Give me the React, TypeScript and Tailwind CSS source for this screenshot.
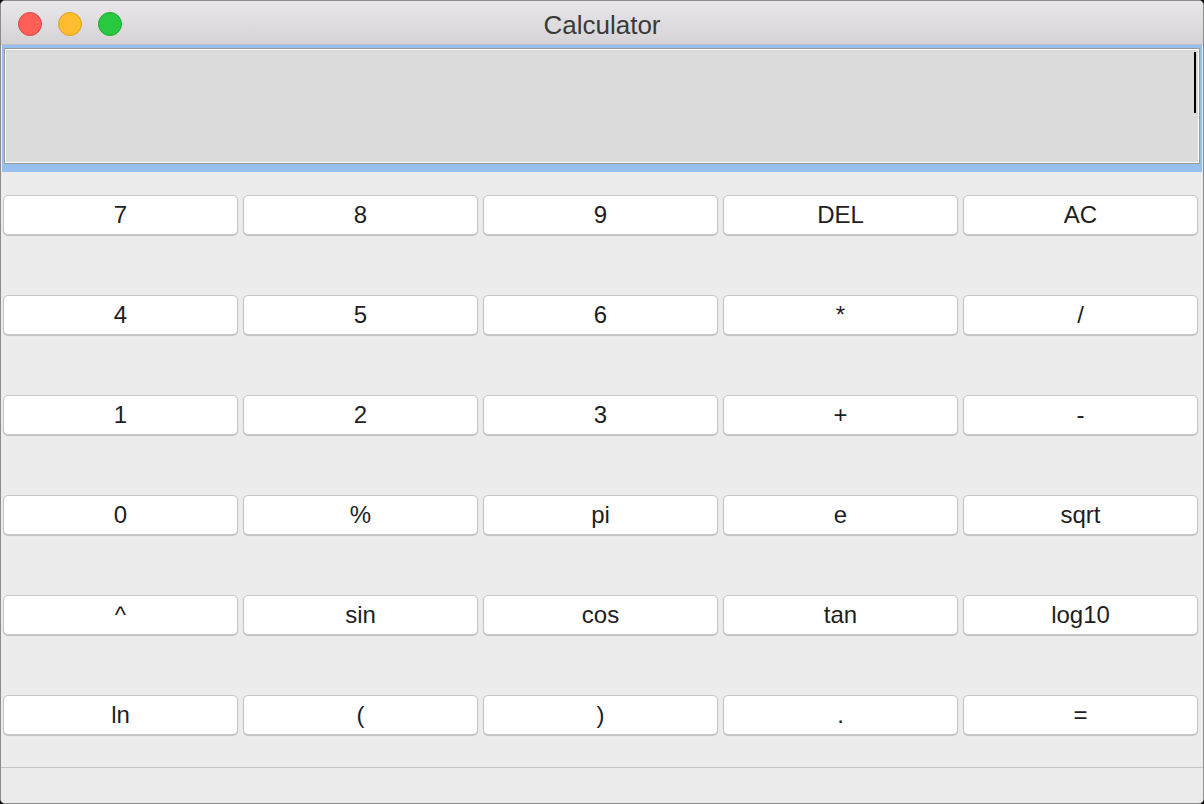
const rows: string[][] = [
  ["7", "8", "9", "DEL", "AC"],
  ["4", "5", "6", "*", "/"],
  ["1", "2", "3", "+", "-"],
  ["0", "%", "pi", "e", "sqrt"],
  ["^", "sin", "cos", "tan", "log10"],
  ["ln", "(", ")", ".", "="],
];

function TrafficLights() {
  return (
    <div className="flex items-center gap-[16px] pl-[17px] pt-[2px]">
      <span className="h-[24px] w-[24px] rounded-full border border-[#e0443e] bg-[#fe5f57]" />
      <span className="h-[24px] w-[24px] rounded-full border border-[#dea123] bg-[#febc2e]" />
      <span className="h-[24px] w-[24px] rounded-full border border-[#1aab29] bg-[#28c840]" />
    </div>
  );
}

function Key({ label }: { label: string }) {
  return (
    <button className="flex h-[40px] items-center justify-center rounded-[5px] border border-[#c6c6c6] bg-white text-[24px] text-[#1e1e1e] shadow-[0_1px_1px_rgba(0,0,0,0.18)]">
      {label}
    </button>
  );
}

export default function App() {
  return (
    <div className="h-[804px] w-[1204px] bg-black font-['Liberation_Sans',Arial,sans-serif]">
      <div className="flex h-full flex-col overflow-hidden rounded-[5px] border border-[#8c8c8c] bg-[#ececec]">
        {/* title bar */}
        <div className="relative flex h-[44px] shrink-0 items-center border-b border-[#c2c0c2] bg-gradient-to-b from-[#e9e7e9] to-[#d5d3d5]">
          <TrafficLights />
          <div className="absolute inset-0 flex items-center justify-center pt-[5px] text-[26px] text-[#3a3a3a]">
            Calculator
          </div>
        </div>

        {/* display, focused */}
        <div className="mx-[1px] shrink-0 bg-[#96c1ee] pb-[8px] pl-[2px] pr-[2px] pt-[3px]">
          <div className="border border-[#9a9a9a] bg-[#dbdbdb] outline-1 -outline-offset-2 outline-white">
            <div className="flex h-[114px] items-start justify-end pr-[3px] pt-[3px]">
              <span className="h-[61px] w-[2px] bg-black" />
            </div>
          </div>
        </div>

        {/* keypad */}
        <div className="grid shrink-0 grid-cols-[repeat(5,235px)] gap-x-[5px] gap-y-[60px] pl-[2px] pt-[23px]">
          {rows.flat().map((k, i) => (
            <Key key={i} label={k} />
          ))}
        </div>

        <div className="flex-1" />
        {/* status bar */}
        <div className="h-[36px] shrink-0 border-t border-[#c4c4c4] bg-[#ebebeb]" />
      </div>
    </div>
  );
}
